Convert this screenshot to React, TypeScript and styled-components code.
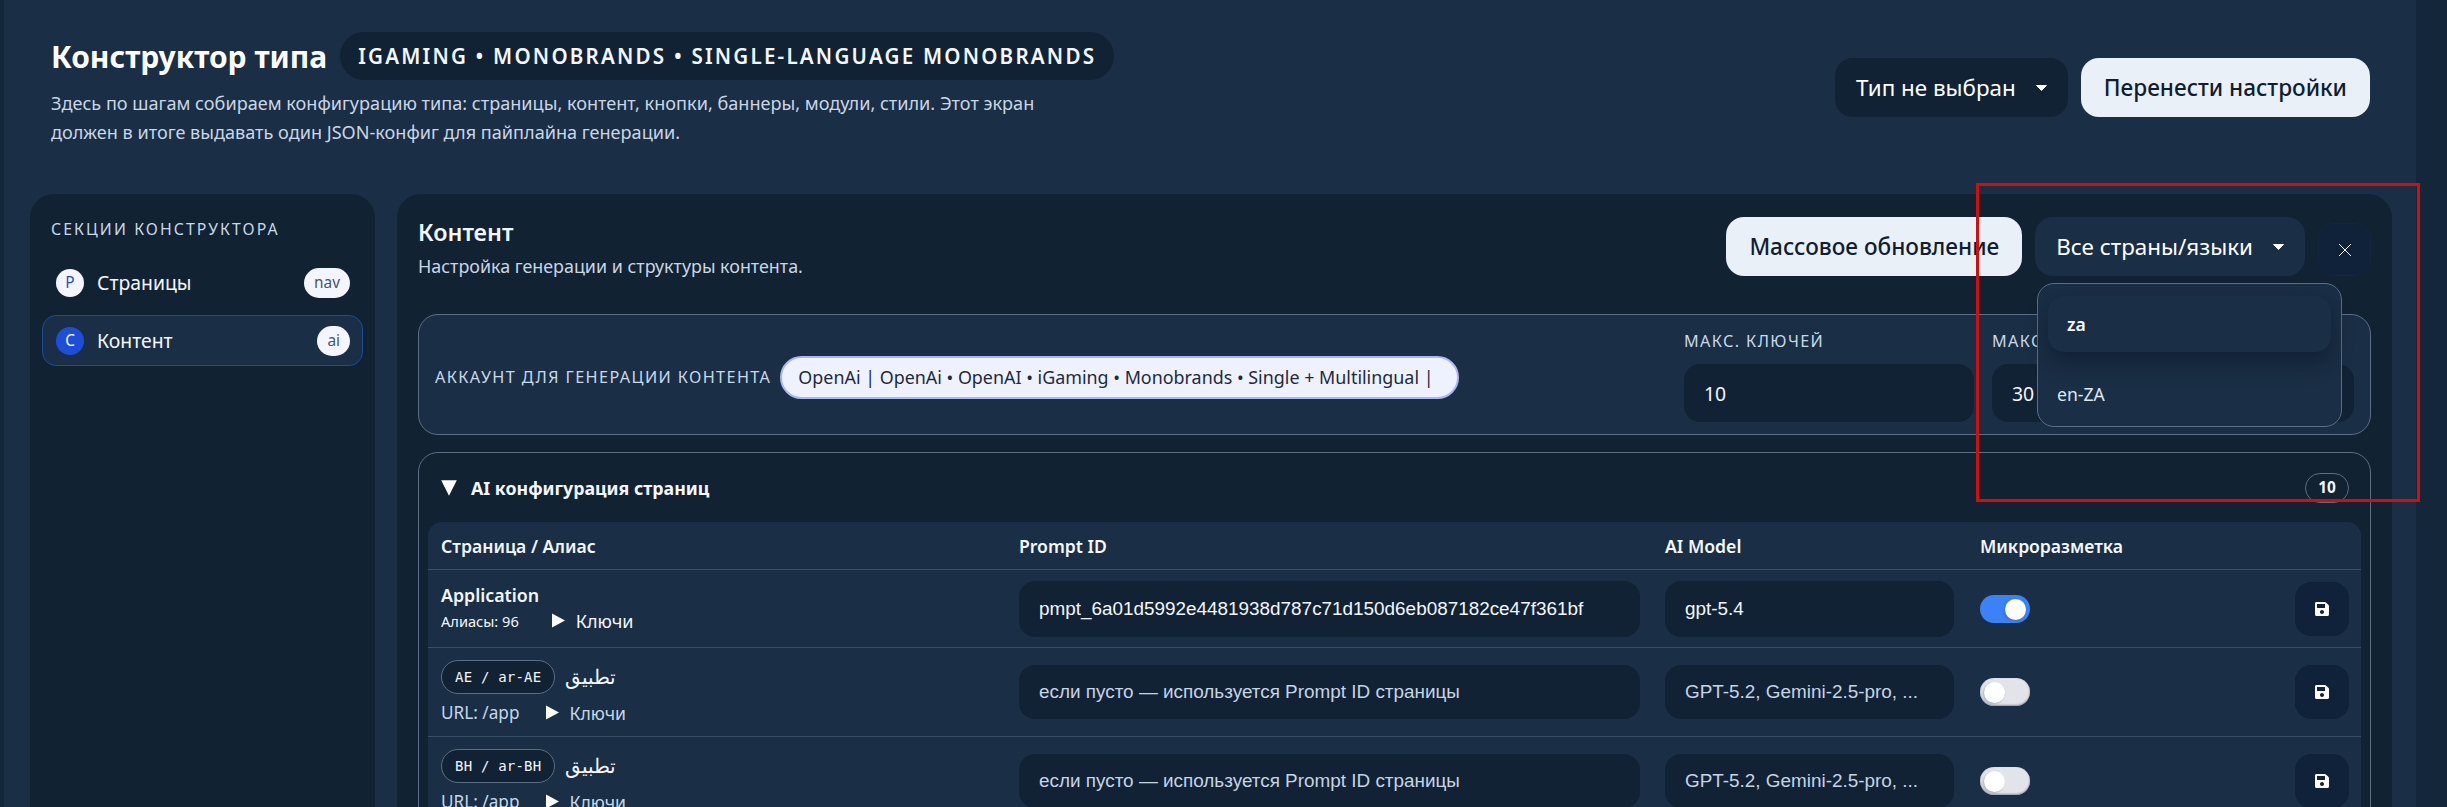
import styled, { createGlobalStyle } from "styled-components";
import { FaSave } from "react-icons/fa";

const GlobalStyle = createGlobalStyle`
	html, body {
		margin: 0;
		height: 100%;
		overflow: hidden;
		background: #13263a;
		color: #f4f7fb;
		font-family: "Noto Sans", "Open Sans", sans-serif;
	}
	* { box-sizing: border-box; }
`;

const Shell = styled.div`
	position: relative;
	width: 2412px;
	height: 807px;
	margin-left: 4px;
	padding: 0 20px 0 26px;
	background: #1a2e45;
`;

const Header = styled.header`
	height: 194px;
	padding: 32px 26px 0 21px;
	display: flex;
	justify-content: space-between;
	align-items: flex-start;
`;

const TitleRow = styled.div`
	display: flex;
	align-items: center;
	gap: 13px;
`;

const Title = styled.h1`
	margin: 0;
	font-size: 30px;
	font-weight: 700;
	color: #ffffff;
`;

const TypePill = styled.span`
	height: 48px;
	padding: 0 18px;
	display: flex;
	align-items: center;
	border-radius: 24px;
	background: #112235;
	font-size: 20.6px;
	font-weight: 600;
	letter-spacing: 2.2px;
	text-transform: uppercase;
`;

const Description = styled.p`
	margin: 9px 0 0;
	width: 1000px;
	font-size: 18.1px;
	line-height: 29px;
	color: #c9d6e4;
`;

const HeaderActions = styled.div`
	margin-top: 26px;
	display: flex;
	gap: 13px;
`;

const SelectButton = styled.button<{ $dark?: boolean }>`
	height: 59px;
	padding: 0 21px;
	display: flex;
	align-items: center;
	gap: 20px;
	border: 0;
	border-radius: 18px;
	background: ${(p) => (p.$dark ? "#112235" : "#1a2e45")};
	color: #ffffff;
	font: 400 22.4px "Noto Sans", sans-serif;
`;

const LightButton = styled.button`
	height: 59px;
	padding: 0 23px;
	border: 0;
	border-radius: 18px;
	background: #eaf0f8;
	color: #0f1e30;
	font: 500 22.6px "Noto Sans", sans-serif;
`;

const Layout = styled.div`
	height: 613px;
	overflow: hidden;
	display: grid;
	grid-template-columns: 345px 1995px;
	gap: 22px;
`;

const Sidebar = styled.aside`
	height: 640px;
	padding: 24px 12px;
	background: #112233;
	border-radius: 24px;
`;

const SidebarTitle = styled.div`
	padding-left: 9px;
	margin-bottom: 17px;
	font-size: 15.8px;
	letter-spacing: 2.1px;
	color: #c9d9e8;
	text-transform: uppercase;
`;

const NavItem = styled.div<{ $active?: boolean }>`
	height: 51px;
	margin-bottom: 7px;
	padding: 0 12px 0 13px;
	display: flex;
	align-items: center;
	gap: 13px;
	border-radius: 14px;
	border: 1px solid ${(p) => (p.$active ? "#1e4a9c" : "transparent")};
	background: ${(p) => (p.$active ? "#1a2e45" : "transparent")};
	font-size: 19.4px;
`;

const NavAvatar = styled.span<{ $active?: boolean }>`
	width: 28px;
	height: 28px;
	display: flex;
	align-items: center;
	justify-content: center;
	border-radius: 50%;
	background: ${(p) => (p.$active ? "#1d4ed8" : "#f4f6ff")};
	color: ${(p) => (p.$active ? "#ffffff" : "#2f49c6")};
	font-size: 15.4px;
`;

const NavBadge = styled.span`
	margin-left: auto;
	height: 30px;
	padding: 0 10px;
	display: flex;
	align-items: center;
	border-radius: 15px;
	background: #f4f6ff;
	color: #475569;
	font-size: 15.4px;
`;

const Main = styled.main`
	height: 640px;
	padding: 23px 21px;
	background: #112233;
	border-radius: 24px;
`;

const MainHead = styled.div`
	height: 97px;
	display: flex;
	justify-content: space-between;
	align-items: flex-start;
`;

const MainTitle = styled.h2`
	margin: 0;
	font-size: 23.4px;
	font-weight: 600;
	line-height: 30px;
`;

const MainSub = styled.p`
	margin: 7px 0 0;
	font-size: 17.9px;
	color: #c9d6e4;
`;

const MainActions = styled.div`
	position: relative;
	display: flex;
	align-items: flex-start;
	gap: 13px;
`;

const CloseButton = styled.button`
	margin-top: 6px;
	width: 53px;
	height: 53px;
	display: flex;
	align-items: center;
	justify-content: center;
	border: 1px solid #14263c;
	border-radius: 15px;
	background: #10213a;
	color: #ffffff;
`;

const Dropdown = styled.div`
	position: absolute;
	z-index: 3;
	top: 66px;
	right: 29px;
	width: 305px;
	height: 144px;
	padding: 12px 10px;
	background: #1a2e45;
	border: 1px solid #5b6e84;
	border-radius: 17px;
`;

const DropdownSearch = styled.div`
	height: 56px;
	padding: 0 19px;
	display: flex;
	align-items: center;
	border-radius: 16px;
	background: #1a2e45;
	box-shadow: 0 10px 22px rgba(8, 18, 30, 0.45);
	font-size: 17.6px;
	font-weight: 600;
`;

const DropdownOption = styled.div`
	margin-top: 30px;
	padding-left: 9px;
	font-size: 17.6px;
	color: #dfe7f0;
`;

const AccountCard = styled.section`
	height: 121px;
	padding: 15px 16px 0;
	display: flex;
	justify-content: space-between;
	background: #1a2e45;
	border: 1px solid #5b6e84;
	border-radius: 20px;
`;

const AccountField = styled.div`
	display: flex;
	align-items: center;
	gap: 9px;
	height: 94px;
`;

const FieldLabel = styled.span`
	font-size: 16.2px;
	letter-spacing: 1.4px;
	color: #c9d9e8;
	text-transform: uppercase;
`;

const AccountPill = styled.span`
	width: 679px;
	height: 43px;
	padding: 0 16px;
	display: flex;
	align-items: center;
	border-radius: 22px;
	background: #eef2ff;
	border: 2px solid #a9b8f0;
	color: #1e2a3a;
	font-size: 17.9px;
	white-space: nowrap;
`;

const NumberFields = styled.div`
	display: flex;
	gap: 18px;
`;

const NumberField = styled.div<{ $width: number }>`
	width: ${(p) => p.$width}px;
	display: flex;
	flex-direction: column;
	gap: 12px;
`;

const NumberInput = styled.div`
	height: 58px;
	padding: 0 20px;
	display: flex;
	align-items: center;
	background: #112235;
	border-radius: 16px;
	font-size: 19.4px;
`;

const AiSection = styled.section`
	margin-top: 17px;
	height: 400px;
	padding: 0 9px;
	border: 1px solid #5b6e84;
	border-radius: 20px;
`;

const AiHead = styled.div`
	height: 69px;
	padding: 0 12px 0 7px;
	display: flex;
	align-items: center;
	gap: 14px;
	font-size: 17.8px;
	font-weight: 700;

	svg {
		margin-left: 6px;
	}
`;

const CountBadge = styled.span`
	margin-left: auto;
	width: 44px;
	height: 30px;
	display: flex;
	align-items: center;
	justify-content: center;
	border: 1px solid #5b6e84;
	border-radius: 15px;
	font-size: 15.4px;
	font-weight: 700;
`;

const Table = styled.div`
	background: #1a2e45;
	border-radius: 14px 14px 0 0;
`;

const Row = styled.div<{ $height: number }>`
	height: ${(p) => p.$height}px;
	padding: 0 12px 0 13px;
	display: grid;
	grid-template-columns: 578px 646px 315px 1fr 54px;
	align-items: center;
	border-bottom: 1px solid #3a4f66;
`;

const HeadCell = styled.div`
	font-size: 17.6px;
	font-weight: 600;
	color: #f4f7fb;
`;

const PageName = styled.div`
	margin-top: -2px;
	font-size: 17.8px;
	font-weight: 600;
`;

const MetaLine = styled.div<{ $big?: boolean }>`
	margin-top: ${(p) => (p.$big ? "2px" : "7px")};
	display: flex;
	align-items: center;
	gap: 10px;
	font-size: ${(p) => (p.$big ? 14.6 : 17.2)}px;
	color: ${(p) => (p.$big ? "#f4f7fb" : "#c6d8ea")};
`;

const KeysToggle = styled.span<{ $big?: boolean }>`
	margin-left: ${(p) => (p.$big ? "23px" : "16px")};
	display: flex;
	align-items: center;
	gap: 11px;
	font-size: ${(p) => (p.$big ? 18 : 17.6)}px;
`;

const AliasLine = styled.div`
	display: flex;
	align-items: center;
	gap: 10px;
`;

const LocalePill = styled.span`
	height: 34px;
	padding: 0 13px;
	display: flex;
	align-items: center;
	border: 1px solid #5b6e84;
	border-radius: 17px;
	background: #112235;
	font: 14px "DejaVu Sans Mono", monospace;
	letter-spacing: 0.2px;
`;

const ArabicName = styled.span`
	font-size: 20px;
`;

const CellInput = styled.div<{ $width: number; $empty?: boolean }>`
	width: ${(p) => p.$width}px;
	height: ${(p) => (p.$empty ? 54 : 56)}px;
	padding: 0 20px;
	display: flex;
	align-items: center;
	background: #112235;
	border-radius: 16px;
	font: 18.9px "Liberation Sans", Arial, sans-serif;
	color: ${(p) => (p.$empty ? "#c6d4e3" : "#f4f7fb")};
`;

const Toggle = styled.span<{ $on?: boolean }>`
	width: 50px;
	height: 28px;
	padding: 4px;
	display: flex;
	justify-content: ${(p) => (p.$on ? "flex-end" : "flex-start")};
	border-radius: 14px;
	background: ${(p) => (p.$on ? "#3b82f6" : "#e2e4ea")};
	box-shadow: ${(p) => (p.$on ? "none" : "inset 0 -1px 2px #8b93a3")};

	&::after {
		content: "";
		width: 21px;
		height: 21px;
		border-radius: 50%;
		background: #ffffff;
		box-shadow: -1px 1px 2px rgba(60, 70, 90, 0.35);
	}
`;

const SaveButton = styled.button`
	width: 54px;
	height: 54px;
	display: flex;
	align-items: center;
	justify-content: center;
	border: 0;
	border-radius: 16px;
	background: #10213a;
	color: #ffffff;
`;

const Annotation = styled.div`
	position: absolute;
	z-index: 5;
	top: 183px;
	left: 1972px;
	width: 444px;
	height: 319px;
	border: 3px solid #d20f0f;
	pointer-events: none;
`;

function Caret() {
	return (
		<svg width="11" height="6" viewBox="0 0 11 6">
			<path d="M0.5 0.5h10L5.5 5.5z" fill="#ffffff" stroke="#ffffff" strokeLinejoin="round" />
		</svg>
	);
}

function Arrow({ down, size = 13 }: { down?: boolean; size?: number }) {
	return (
		<svg width={size} height={size + 2} viewBox="0 0 13 15">
			<path d={down ? "M0 1h13L6.5 14z" : "M0 0.5L13 7.5L0 14.5z"} fill="#ffffff" />
		</svg>
	);
}

const locales = [
	{ code: "AE / ar-AE" },
	{ code: "BH / ar-BH" },
];

function App() {
	return (
		<>
			<GlobalStyle />
			<Shell>
				<Header>
					<div>
						<TitleRow>
							<Title>Конструктор типа</Title>
							<TypePill>iGaming • Monobrands • Single-language monobrands</TypePill>
						</TitleRow>
						<Description>
							Здесь по шагам собираем конфигурацию типа: страницы, контент, кнопки, баннеры, модули, стили. Этот экран
							<br />
							должен в итоге выдавать один JSON-конфиг для пайплайна генерации.
						</Description>
					</div>
					<HeaderActions>
						<SelectButton $dark>
							Тип не выбран
							<Caret />
						</SelectButton>
						<LightButton>Перенести настройки</LightButton>
					</HeaderActions>
				</Header>
				<Layout>
					<Sidebar>
						<SidebarTitle>Секции конструктора</SidebarTitle>
						<NavItem>
							<NavAvatar>P</NavAvatar>
							Страницы
							<NavBadge>nav</NavBadge>
						</NavItem>
						<NavItem $active>
							<NavAvatar $active>C</NavAvatar>
							Контент
							<NavBadge>ai</NavBadge>
						</NavItem>
					</Sidebar>
					<Main>
						<MainHead>
							<div>
								<MainTitle>Контент</MainTitle>
								<MainSub>Настройка генерации и структуры контента.</MainSub>
							</div>
							<MainActions>
								<LightButton>Массовое обновление</LightButton>
								<SelectButton>
									Все страны/языки
									<Caret />
								</SelectButton>
								<CloseButton>
									<svg width="14" height="14" viewBox="0 0 14 14">
										<path d="M1 1L13 13M13 1L1 13" stroke="#ffffff" strokeWidth="1" />
									</svg>
								</CloseButton>
								<Dropdown>
									<DropdownSearch>za</DropdownSearch>
									<DropdownOption>en-ZA</DropdownOption>
								</Dropdown>
							</MainActions>
						</MainHead>
						<AccountCard>
							<AccountField>
								<FieldLabel>Аккаунт для генерации контента</FieldLabel>
								<AccountPill>OpenAi | OpenAi • OpenAI • iGaming • Monobrands • Single + Multilingual |</AccountPill>
							</AccountField>
							<NumberFields>
								<NumberField $width={290}>
									<FieldLabel>Макс. ключей</FieldLabel>
									<NumberInput>10</NumberInput>
								</NumberField>
								<NumberField $width={362}>
									<FieldLabel>Макс. слов</FieldLabel>
									<NumberInput>30</NumberInput>
								</NumberField>
							</NumberFields>
						</AccountCard>
						<AiSection>
							<AiHead>
								<Arrow down size={16} />
								AI конфигурация страниц
								<CountBadge>10</CountBadge>
							</AiHead>
							<Table>
								<Row $height={48}>
									<HeadCell>Страница / Алиас</HeadCell>
									<HeadCell>Prompt ID</HeadCell>
									<HeadCell>AI Model</HeadCell>
									<HeadCell>Микроразметка</HeadCell>
									<span />
								</Row>
								<Row $height={78}>
									<div>
										<PageName>Application</PageName>
										<MetaLine $big>
											Алиасы: 96
											<KeysToggle $big>
												<Arrow />
												Ключи
											</KeysToggle>
										</MetaLine>
									</div>
									<CellInput $width={621}>pmpt_6a01d5992e4481938d787c71d150d6eb087182ce47f361bf</CellInput>
									<CellInput $width={289}>gpt-5.4</CellInput>
									<Toggle $on />
									<SaveButton>
										<FaSave size={16} />
									</SaveButton>
								</Row>
								{locales.map((locale) => (
									<Row $height={89} key={locale.code}>
										<div>
											<AliasLine>
												<LocalePill>{locale.code}</LocalePill>
												<ArabicName>تطبيق</ArabicName>
											</AliasLine>
											<MetaLine>
												URL: /app
												<KeysToggle>
													<Arrow />
													Ключи
												</KeysToggle>
											</MetaLine>
										</div>
										<CellInput $width={621} $empty>
											если пусто — используется Prompt ID страницы
										</CellInput>
										<CellInput $width={289} $empty>
											GPT-5.2, Gemini-2.5-pro, ...
										</CellInput>
										<Toggle />
										<SaveButton>
											<FaSave size={16} />
										</SaveButton>
									</Row>
								))}
							</Table>
						</AiSection>
					</Main>
				</Layout>
				<Annotation />
			</Shell>
		</>
	);
}

export default App;
